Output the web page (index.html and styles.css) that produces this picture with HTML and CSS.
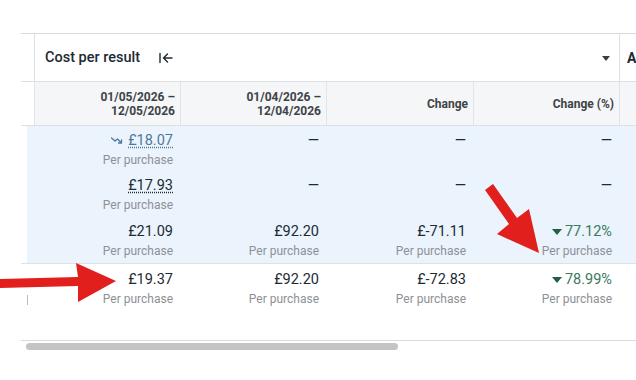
FILE: index.html
```html
<!DOCTYPE html>
<html>
<head>
<meta charset="utf-8">
<link rel="stylesheet" href="styles.css">
</head>
<body>
<div class="table">
  <div class="row title">
    <div class="gut"></div>
    <div class="tcell">
      <span class="ttl">Cost per result</span>
      <svg class="collapse" width="16" height="14" viewBox="0 0 16 14"><path d="M2 2.5V11.5M14 7H5.5M9.5 3L5.5 7L9.5 11" fill="none" stroke="#1c2b33" stroke-width="1.4" stroke-linecap="round" stroke-linejoin="round"/></svg>
      <span class="spacer"></span>
      <svg class="caret" width="8" height="5" viewBox="0 0 8 5"><path d="M0 0H8L4 5Z" fill="#3b3e42"/></svg>
    </div>
    <div class="next">A</div>
  </div>
  <div class="row head">
    <div class="gut"></div>
    <div class="c c1">01/05/2026 –<br>12/05/2026</div>
    <div class="c c2">01/04/2026 –<br>12/04/2026</div>
    <div class="c c3">Change</div>
    <div class="c c4">Change (%)</div>
    <div class="c c5"></div>
  </div>
  <div class="row data sel r1">
    <div class="gut"></div>
    <div class="c c1">
      <div class="val"><svg class="trend" width="12" height="7" viewBox="0 0 12 7"><path d="M0.5 1L4 4L6.5 2L10.5 6M7.5 6H10.5V3" fill="none" stroke="#4d7a9c" stroke-width="1.3" stroke-linecap="round" stroke-linejoin="round"/></svg><span class="link">£18.07</span></div>
      <div class="lbl">Per purchase</div>
    </div>
    <div class="c c2"><div class="val">—</div></div>
    <div class="c c3"><div class="val">—</div></div>
    <div class="c c4"><div class="val">—</div></div>
    <div class="c c5"></div>
  </div>
  <div class="row data sel r2">
    <div class="gut"></div>
    <div class="c c1">
      <div class="val"><span class="dot">£17.93</span></div>
      <div class="lbl">Per purchase</div>
    </div>
    <div class="c c2"><div class="val">—</div></div>
    <div class="c c3"><div class="val">—</div></div>
    <div class="c c4"><div class="val">—</div></div>
    <div class="c c5"></div>
  </div>
  <div class="row data sel r3">
    <div class="gut"></div>
    <div class="c c1"><div class="val">£21.09</div><div class="lbl">Per purchase</div></div>
    <div class="c c2"><div class="val">£92.20</div><div class="lbl">Per purchase</div></div>
    <div class="c c3"><div class="val">£-71.11</div><div class="lbl">Per purchase</div></div>
    <div class="c c4"><div class="val good"><span class="tri"></span>77.12%</div><div class="lbl">Per purchase</div></div>
    <div class="c c5"></div>
  </div>
  <div class="row data r4">
    <div class="gut"><span class="tick"></span></div>
    <div class="c c1"><div class="val">£19.37</div><div class="lbl">Per purchase</div></div>
    <div class="c c2"><div class="val">£92.20</div><div class="lbl">Per purchase</div></div>
    <div class="c c3"><div class="val">£-72.83</div><div class="lbl">Per purchase</div></div>
    <div class="c c4"><div class="val good"><span class="tri"></span>78.99%</div><div class="lbl">Per purchase</div></div>
    <div class="c c5"></div>
  </div>
  <div class="foot"></div>
  <div class="scroll"><div class="thumb"></div></div>
</div>
<svg class="marks" width="636" height="380" viewBox="0 0 636 380">
  <polygon points="0,279 78,277 76,263 116,281 78,302 78,286 0,288" fill="#e11f1c"/>
  <polygon points="485,190 493,184 517,218 529,209 539,253 497,234 509,224" fill="#e11f1c"/>
</svg>
</body>
</html>
```
FILE: styles.css
```css
html, body {
  margin: 0;
  padding: 0;
  background: #ffffff;
}
body {
  font-family: Roboto, "Noto Sans", "Liberation Sans", sans-serif;
  color: #1c2b33;
  width: 636px;
  height: 380px;
  overflow: hidden;
  position: relative;
}
.table {
  margin: 33px 0 0 21px;
  border-top: 1px solid #d6d9dd;
}
.row {
  display: flex;
}
.gut {
  width: 13px;
  flex: none;
}
.c, .tcell {
  box-sizing: border-box;
  flex: none;
}
.c1 { width: 146px; }
.c2 { width: 146px; }
.c3 { width: 147px; }
.c4 { width: 146px; }
.c5 { flex: 1; }

.title {
  height: 47px;
}
.tcell {
  width: 585px;
  border-left: 1px solid #dcdfe3;
  display: flex;
  align-items: center;
  padding: 0 9px 0 10px;
}
.ttl {
  font-size: 14.5px;
  font-weight: 500;
  color: #1c2b33;
}
.collapse {
  margin-left: 18px;
  margin-top: 1px;
}
.spacer { flex: 1; }
.caret { margin-top: 1px; }
.next {
  flex: 1;
  border-left: 1px solid #dcdfe3;
  padding-left: 7px;
  display: flex;
  align-items: center;
  font-weight: 700;
  font-size: 14px;
  white-space: nowrap;
}

.head {
  height: 45px;
  box-sizing: border-box;
  border-top: 1px solid #dcdfe3;
  border-bottom: 1px solid #dcdfe3;
}
.head .c {
  background: #f5f6f7;
  border-left: 1px solid #e2e4e7;
  display: flex;
  align-items: center;
  justify-content: flex-end;
  text-align: right;
  padding-right: 5px;
  font-size: 12px;
  font-weight: 700;
  line-height: 14px;
  color: #3e4347;
}
.head .c5 { padding: 0; }

.data .c {
  text-align: right;
  padding-right: 7px;
}
.sel {
  background: linear-gradient(to right, #ffffff 6px, #ebf3fd 6px);
}
.r1 { height: 45px; padding-top: 6px; box-sizing: border-box; }
.r2 { height: 45px; padding-top: 6px; box-sizing: border-box; }
.r3 {
  height: 48px;
  padding-top: 7px;
  box-sizing: border-box;
  border-bottom: 1px solid #dfe1e4;
}
.r4 { height: 47px; padding-top: 7px; box-sizing: border-box; }
.val {
  font-size: 14.5px;
  line-height: 18px;
  color: #1c2b33;
  display: flex;
  justify-content: flex-end;
  align-items: center;
}
.lbl {
  font-size: 12px;
  line-height: 19px;
  margin-top: 1px;
  color: #8d9196;
}
.trend { margin-right: 5px; margin-top: -1px; }
.link {
  color: #4d7a9c;
  text-decoration: underline dotted #4d7a9c;
  text-underline-offset: 2px;
}
.dot {
  text-decoration: underline dotted #1c2b33;
  text-underline-offset: 2px;
}
.good { color: #3a7a5c; }
.tri {
  width: 0;
  height: 0;
  border-left: 5px solid transparent;
  border-right: 5px solid transparent;
  border-top: 6px solid #245e47;
  margin-right: 3px;
}
.r4 .gut {
  display: flex;
  align-items: flex-end;
  padding-left: 6px;
  box-sizing: border-box;
}
.tick {
  width: 1px;
  height: 10px;
  background: #b8bcc2;
  margin-bottom: 6px;
}
.foot {
  height: 29px;
  border-bottom: 1px solid #d9dcdf;
}
.scroll {
  padding: 2px 0 0 5px;
}
.thumb {
  width: 372px;
  height: 7px;
  border-radius: 4px;
  background: #c4c4c4;
}
.marks {
  position: absolute;
  left: 0;
  top: 0;
  pointer-events: none;
}
```
